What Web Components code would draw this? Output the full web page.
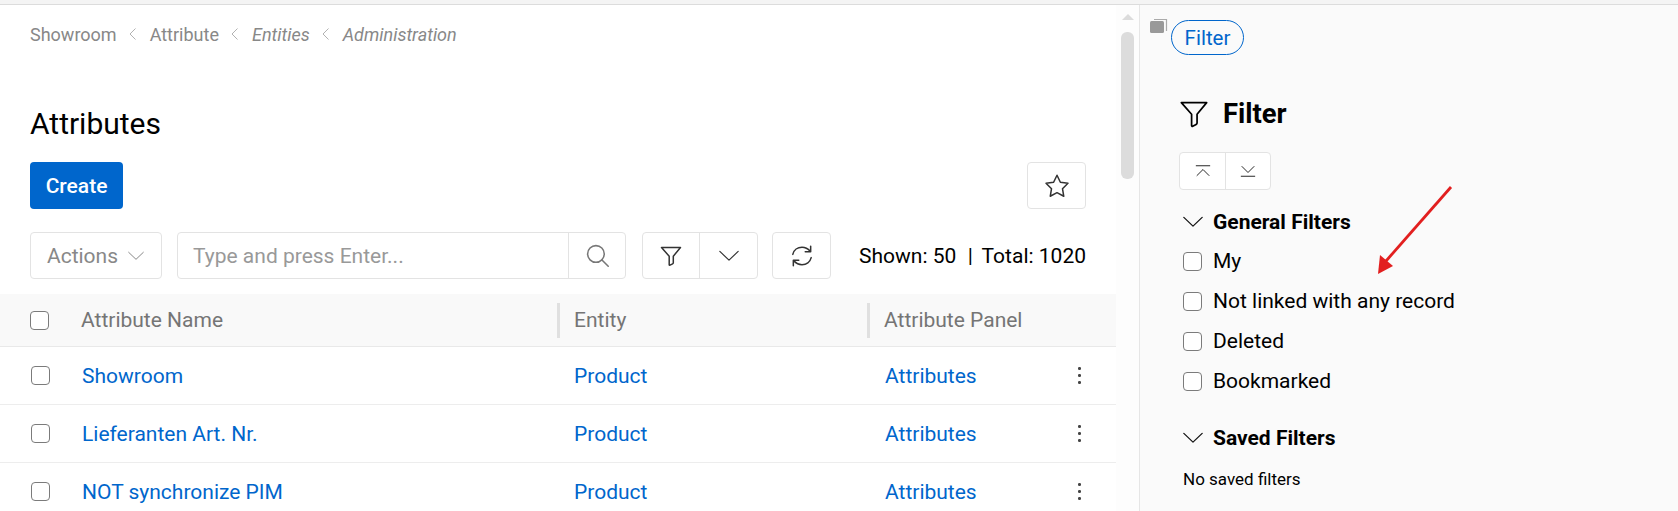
<!DOCTYPE html>
<html>
<head>
<meta charset="utf-8">
<title>Attributes</title>
<style>
  html, body { margin: 0; height: 511px; overflow: hidden; background: #fff; }
  body { font-family: Roboto, "Liberation Sans", sans-serif; color: #000; }
</style>
</head>
<body>
<app-shell>
  <main-view slot="main"></main-view>
  <filter-panel slot="panel"></filter-panel>
</app-shell>

<script>
const ICONS = {
  chevronDown: '<path d="M1 6.500l11 10.500 11-10.500"/>',
  chevronLeft: '<path d="M15 5l-7 7 7 7"/>',
  funnel: '<path d="M2.500 3.500h19L14.300 12.200v6.600c0 .5-.3.8-.7 1l-2.600 1.400c-.4.2-.8-.1-.8-.5v-8.500z"/>',
  search: '<circle cx="10.500" cy="10.500" r="8"/><path d="M16.300 16.300l6 6"/>',
  refresh: '<path d="M3.500 10.500C4.500 6.500 8 4 12 4c3 0 5.500 1.300 7.500 3.500"/><path d="M20 3v5h-5"/><path d="M20.500 13.500C19.500 17.500 16 20 12 20c-3 0-5.500-1.300-7.500-3.500"/><path d="M4 21v-5h5"/>',
  star: '<path d="M12 2.800l2.900 6 6.500.9-4.700 4.600 1.100 6.500-5.800-3.100-5.800 3.100 1.100-6.500-4.700-4.600 6.500-.9z"/>',
  collapseAll: '<path d="M3 5h18"/><path d="M4 18l8-8 8 8"/>',
  expandAll: '<path d="M3 19h18"/><path d="M4 6l8 8 8-8"/>'
};

class UiIcon extends HTMLElement {
  connectedCallback() {
    const size = this.getAttribute('size') || 24;
    const width = this.getAttribute('stroke') || 1.5;
    this.attachShadow({ mode: 'open' }).innerHTML = `
      <style>
        :host { display: inline-flex; line-height: 0; }
        svg { fill: none; stroke: currentColor; stroke-width: ${width}; stroke-linecap: round; stroke-linejoin: round; }
      </style>
      <svg width="${size}" height="${size}" viewBox="0 0 24 24">${ICONS[this.getAttribute('name')]}</svg>`;
  }
}
customElements.define('ui-icon', UiIcon);

class UiCheck extends HTMLElement {
  constructor() {
    super();
    this.attachShadow({ mode: 'open' }).innerHTML = `
      <style>
        :host { display: block; width: 19px; height: 19px; box-sizing: border-box; border: 1.5px solid #7b7b7b; border-radius: 4px; background: #fff; flex: none; }
      </style>`;
  }
}
customElements.define('ui-check', UiCheck);

class BoxButton extends HTMLElement {
  constructor() {
    super();
    this.attachShadow({ mode: 'open' }).innerHTML = `
      <style>
        :host { display: flex; box-sizing: border-box; border: 1px solid #e3e3e3; border-radius: 4px; background: #fff; color: #333; overflow: hidden; }
        ::slotted(*) { display: flex; align-items: center; justify-content: center; flex: 1; }
        ::slotted(*:not(:first-child)) { border-left: 1px solid #e3e3e3; }
      </style>
      <slot></slot>`;
  }
}
customElements.define('box-button', BoxButton);

class BreadCrumbs extends HTMLElement {
  constructor() {
    super();
    this.attachShadow({ mode: 'open' }).innerHTML = `
      <style>
        :host { display: flex; align-items: center; height: 24px; font-size: 18px; color: #888; }
        span { white-space: nowrap; }
        i { font-style: italic; }
        ui-icon { color: #b0b0b0; margin: 0 7.500px; }
      </style>
      <span>Showroom</span><ui-icon name="chevronLeft" size="18" stroke="1.300"></ui-icon>
      <span>Attribute</span><ui-icon name="chevronLeft" size="18" stroke="1.300"></ui-icon>
      <i>Entities</i><ui-icon name="chevronLeft" size="18" stroke="1.300"></ui-icon>
      <i>Administration</i>`;
  }
}
customElements.define('bread-crumbs', BreadCrumbs);

class ListToolbar extends HTMLElement {
  constructor() {
    super();
    this.attachShadow({ mode: 'open' }).innerHTML = `
      <style>
        :host { display: flex; align-items: stretch; height: 47px; }
        .actions { width: 132px; margin-right: 15px; color: #888; font-size: 21px; }
        .actions div { gap: 10px; padding-right: 1px; }
        .search { width: 449px; margin-right: 16px; }
        .search .text { flex: none; width: 390px; justify-content: flex-start; padding-left: 15px; box-sizing: border-box; color: #999; font-size: 21px; }
        .search .go { color: #777; }
        .filter { width: 116px; margin-right: 14px; }
        .filter div:first-child { flex: none; width: 56px; }
        .refresh { width: 59px; }
        .count { margin-left: auto; align-self: center; font-size: 21px; white-space: pre; }
        .sep { margin: 0 3.500px 0 1px; }
      </style>
      <box-button class="actions"><div>Actions<ui-icon name="chevronDown" size="16" stroke="1.500"></ui-icon></div></box-button>
      <box-button class="search">
        <div class="text">Type and press Enter...</div>
        <div class="go"><ui-icon name="search" size="25" stroke="1.500"></ui-icon></div>
      </box-button>
      <box-button class="filter">
        <div><ui-icon name="funnel" size="24" stroke="1.500"></ui-icon></div>
        <div><ui-icon name="chevronDown" size="20" stroke="1.400"></ui-icon></div>
      </box-button>
      <box-button class="refresh"><div><ui-icon name="refresh" size="26" stroke="1.400"></ui-icon></div></box-button>
      <span class="count">Shown: 50  <span class="sep">| </span>Total: 1020</span>`;
  }
}
customElements.define('list-toolbar', ListToolbar);

class TableHead extends HTMLElement {
  constructor() {
    super();
    this.attachShadow({ mode: 'open' }).innerHTML = `
      <style>
        :host { display: grid; grid-template-columns: 81px 476px 310px 1fr; height: 53px; box-sizing: border-box; background: #f9f9f9; border-bottom: 1px solid #e9e9e9; align-items: center; color: #757575; font-size: 21px; }
        .check { padding-left: 30px; }
        .col { display: flex; align-items: center; height: 35px; }
        .col + .col { border-left: 3px solid #e0e0e0; padding-left: 14px; }
      </style>
      <div class="check"><ui-check></ui-check></div>
      <div class="col">Attribute Name</div>
      <div class="col">Entity</div>
      <div class="col">Attribute Panel</div>`;
  }
}
customElements.define('table-head', TableHead);

class TableRow extends HTMLElement {
  connectedCallback() {
    this.attachShadow({ mode: 'open' }).innerHTML = `
      <style>
        :host { display: grid; grid-template-columns: 82px 492px 311px 1fr 38px; height: 58px; box-sizing: border-box; border-bottom: 1px solid #ededed; align-items: center; color: #0066cc; font-size: 21px; }
        .check { padding-left: 31px; }
        .more { display: flex; flex-direction: column; gap: 4.500px; }
        .more b { width: 2.500px; height: 2.500px; border-radius: 50%; background: #444; }
      </style>
      <div class="check"><ui-check></ui-check></div>
      <div>${this.getAttribute('name')}</div>
      <div>Product</div>
      <div>Attributes</div>
      <div class="more"><b></b><b></b><b></b></div>`;
  }
}
customElements.define('table-row', TableRow);

class MainView extends HTMLElement {
  constructor() {
    super();
    this.attachShadow({ mode: 'open' }).innerHTML = `
      <style>
        :host { display: block; }
        .top { padding: 17px 30px 0; }
        h1 { margin: 60px 0 20px; font-size: 30px; font-weight: 400; line-height: 36px; }
        .bar { display: flex; justify-content: space-between; margin-bottom: 23px; }
        .create { display: flex; align-items: center; justify-content: center; width: 93px; height: 47px; border-radius: 4px; background: #0066cc; color: #fff; font-size: 21px; font-weight: 500; }
        .star { width: 59px; height: 47px; }
        .table { margin-top: 15px; }
      </style>
      <div class="top">
        <bread-crumbs></bread-crumbs>
        <h1>Attributes</h1>
        <div class="bar">
          <div class="create">Create</div>
          <box-button class="star"><div><ui-icon name="star" size="28" stroke="1.300"></ui-icon></div></box-button>
        </div>
        <list-toolbar></list-toolbar>
      </div>
      <div class="table">
        <table-head></table-head>
        <table-row name="Showroom"></table-row>
        <table-row name="Lieferanten Art. Nr."></table-row>
        <table-row name="NOT synchronize PIM"></table-row>
      </div>`;
  }
}
customElements.define('main-view', MainView);

class CheckRow extends HTMLElement {
  constructor() {
    super();
    this.attachShadow({ mode: 'open' }).innerHTML = `
      <style>
        :host { display: flex; align-items: center; gap: 11px; height: 40px; font-size: 21px; }
      </style>
      <ui-check></ui-check><slot></slot>`;
  }
}
customElements.define('check-row', CheckRow);

class FilterGroup extends HTMLElement {
  connectedCallback() {
    this.attachShadow({ mode: 'open' }).innerHTML = `
      <style>
        :host { display: flex; align-items: center; gap: 10px; height: 26px; font-size: 21px; font-weight: 700; }
        ui-icon { color: #111; }
      </style>
      <ui-icon name="chevronDown" size="20" stroke="1.500"></ui-icon>${this.getAttribute('label')}`;
  }
}
customElements.define('filter-group', FilterGroup);

class FilterPanel extends HTMLElement {
  constructor() {
    super();
    this.attachShadow({ mode: 'open' }).innerHTML = `
      <style>
        :host { display: block; position: relative; height: 100%; box-sizing: border-box; border-left: 1px solid #e6e6e6; background: #fafafa; }
        .tabs { display: flex; align-items: flex-start; gap: 3px; padding: 15px 0 0 10px; }
        .stack { width: 18px; height: 16px; margin-top: -2px; }
        .pill { display: flex; align-items: center; justify-content: center; box-sizing: border-box; width: 73px; height: 35px; border: 1px solid #0066cc; border-radius: 18px; color: #0066cc; font-size: 20.500px; }
        .body { padding-left: 43px; }
        .head { display: flex; align-items: center; height: 34px; margin: 42px 0 21px -5px; gap: 13px; font-size: 27.400px; font-weight: 700; }
        .moves { width: 92px; height: 38px; margin-left: -4px; margin-bottom: 19px; color: #222; }
        .moves div:first-child { flex: none; width: 45px; }
        .rows { margin: 6px 0 24px; }
        .none { margin-top: 15px; line-height: 26px; font-size: 17px; }
        .arrow { position: absolute; left: 220px; top: 170px; }
      </style>
      <div class="tabs">
        <svg class="stack" viewBox="0 0 18 16"><path d="M4 1.500h12.500V13" fill="none" stroke="#aaa" stroke-width="1.200"/><rect x="0" y="3" width="14" height="12" rx="1.500" fill="#999"/></svg>
        <div class="pill">Filter</div>
      </div>
      <div class="body">
        <div class="head"><ui-icon name="funnel" size="32" stroke="1.300"></ui-icon>Filter</div>
        <box-button class="moves">
          <div><ui-icon name="collapseAll" size="18" stroke="1.300"></ui-icon></div>
          <div><ui-icon name="expandAll" size="18" stroke="1.300"></ui-icon></div>
        </box-button>
        <filter-group label="General Filters"></filter-group>
        <div class="rows">
          <check-row>My</check-row>
          <check-row>Not linked with any record</check-row>
          <check-row>Deleted</check-row>
          <check-row>Bookmarked</check-row>
        </div>
        <filter-group label="Saved Filters"></filter-group>
        <div class="none">No saved filters</div>
      </div>
      <svg class="arrow" width="100" height="110" viewBox="0 0 100 110">
        <path d="M91 12L26 86" stroke="#e21f1f" stroke-width="2.800" fill="none"/>
        <path d="M18 99L20 80L33 91Z" fill="#e21f1f"/>
      </svg>`;
  }
}
customElements.define('filter-panel', FilterPanel);

class AppShell extends HTMLElement {
  constructor() {
    super();
    this.attachShadow({ mode: 'open' }).innerHTML = `
      <style>
        :host { display: flex; flex-direction: column; height: 511px; overflow: hidden; }
        .strip { height: 4px; background: #f4f4f4; border-bottom: 1px solid #dcdcdc; flex: none; }
        .cols { display: grid; grid-template-columns: 1116px 23px 1fr; flex: 1; min-height: 0; }
        .scroll { display: flex; flex-direction: column; align-items: center; background: #fdfdfd; }
        .up { width: 0; height: 0; margin-top: 9px; border: 6px solid transparent; border-top: 0; border-bottom: 6px solid #dcdcdc; }
        .thumb { width: 13px; height: 147px; margin-top: 12px; border-radius: 6px; background: #dcdcdc; }
      </style>
      <div class="strip"></div>
      <div class="cols">
        <slot name="main"></slot>
        <div class="scroll"><div class="up"></div><div class="thumb"></div></div>
        <slot name="panel"></slot>
      </div>`;
  }
}
customElements.define('app-shell', AppShell);
</script>
</body>
</html>
